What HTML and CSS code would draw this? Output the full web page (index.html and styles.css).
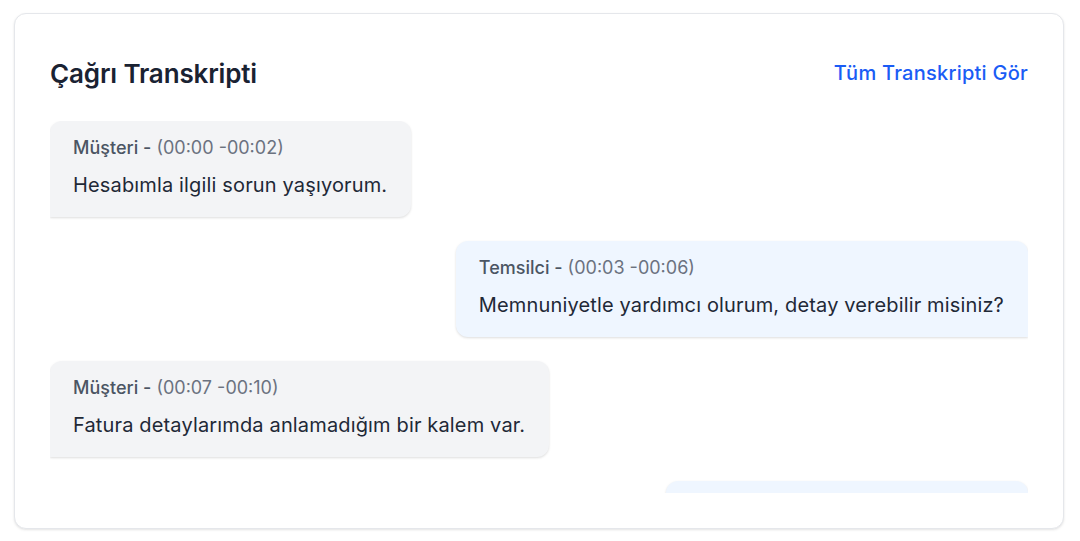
FILE: index.html
```html
<!DOCTYPE html>
<html lang="tr">
<head>
<meta charset="utf-8">
<link rel="stylesheet" href="styles.css">
</head>
<body>
<section class="card">
  <header class="card-header">
    <h2 class="title">Çağrı Transkripti</h2>
    <a class="link" href="#">Tüm Transkripti Gör</a>
  </header>
  <div class="messages">
    <div class="msg customer">
      <div class="meta"><span class="who">Müşteri -</span> <span class="time">(00:00 -00:02)</span></div>
      <p class="text">Hesabımla ilgili sorun yaşıyorum.</p>
    </div>
    <div class="msg agent">
      <div class="meta"><span class="who">Temsilci -</span> <span class="time">(00:03 -00:06)</span></div>
      <p class="text">Memnuniyetle yardımcı olurum, detay verebilir misiniz?</p>
    </div>
    <div class="msg customer">
      <div class="meta"><span class="who">Müşteri -</span> <span class="time">(00:07 -00:10)</span></div>
      <p class="text">Fatura detaylarımda anlamadığım bir kalem var.</p>
    </div>
    <div class="msg agent">
      <div class="meta"><span class="who">Temsilci -</span> <span class="time">(00:11 -00:14)</span></div>
      <p class="text">Peki, hangi kalem soruyorsunuz?</p>
    </div>
  </div>
</section>
</body>
</html>
```

FILE: styles.css
```css
* { box-sizing: border-box; }
html, body { margin: 0; padding: 0; background: #ffffff; }
body {
  padding: 13px 16px 12px 14px;
  font-family: Inter, "Noto Sans", "Liberation Sans", sans-serif;
  color: #1f2937;
}
.card {
  width: 1050px;
  height: 516px;
  background: #ffffff;
  border: 1px solid #e5e7eb;
  border-radius: 12px;
  box-shadow: 0 1px 3px rgba(0,0,0,0.08), 0 1px 2px rgba(0,0,0,0.04);
  padding: 35px;
  display: flex;
  flex-direction: column;
}
.card-header {
  height: 48px;
  display: flex;
  align-items: center;
  justify-content: space-between;
  margin-bottom: 24px;
  flex-shrink: 0;
}
.title {
  margin: 0;
  font-size: 26px;
  font-weight: 600;
  color: #1a2232;
  letter-spacing: -0.15px;
}
.link {
  font-size: 20px;
  font-weight: 500;
  color: #1a5cf5;
  text-decoration: none;
  letter-spacing: 0.25px;
}
.messages {
  height: 372px;
  overflow: hidden;
  display: flex;
  flex-direction: column;
  gap: 24px;
}
.msg {
  flex-shrink: 0;
  width: fit-content;
  height: 96px;
  padding: 15px 24px 0 23px;
  border-radius: 12px;
  box-shadow: 0 1px 3px rgba(0,0,0,0.09), 0 1px 2px rgba(0,0,0,0.05);
}
.customer {
  align-self: flex-start;
  background: #f3f4f6;
  border-bottom-left-radius: 0;
}
.agent {
  align-self: flex-end;
  background: #eff6ff;
  border-bottom-right-radius: 0;
}
.meta {
  font-size: 18px;
  line-height: 24px;
}
.who {
  font-weight: 500;
  color: #4b5563;
}
.time {
  color: #6b7280;
}
.text {
  margin: 10px 0 0 0;
  font-size: 20px;
  line-height: 30px;
  letter-spacing: 0.15px;
  color: #1f2937;
}
```
